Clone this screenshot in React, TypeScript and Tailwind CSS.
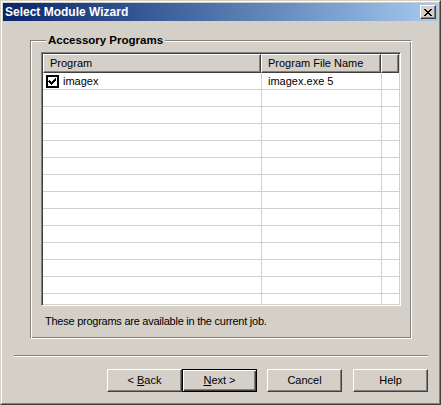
const rows = Array.from({ length: 14 }, (_, i) => i);

const Button = ({ children, isDefault = false, className = "" }: { children: React.ReactNode; isDefault?: boolean; className?: string }) =>
  isDefault ? (
    <div className={"w-[75px] h-[23px] border border-black bg-[#d4d0c8] flex items-center justify-center shadow-[inset_1px_1px_0_#fff,inset_-1px_-1px_0_#404040,inset_-2px_-2px_0_#808080] " + className}>
      {children}
    </div>
  ) : (
    <div className={"w-[75px] h-[23px] border border-t-white border-l-white border-r-[#404040] border-b-[#404040] bg-[#d4d0c8] flex items-center justify-center shadow-[inset_-1px_-1px_0_#808080] " + className}>
      {children}
    </div>
  );

export default function App() {
  return (
    <div className="w-[441px] h-[405px] bg-[#d4d0c8] border border-t-[#d4d0c8] border-l-[#d4d0c8] border-r-[#404040] border-b-[#404040] font-['Liberation_Sans',Arial,sans-serif] text-[11px] text-black">
      <div className="h-full border border-t-white border-l-white border-r-[#808080] border-b-[#808080] p-px flex flex-col">
        {/* Title bar */}
        <div className="h-[18px] bg-linear-to-r from-[#0a246a] to-[#a6caf0] flex items-center justify-between pl-[2px] pr-[2px]">
          <span className="text-white font-bold text-[12px] leading-[18px]">Select Module Wizard</span>
          <div className="w-[16px] h-[14px] bg-[#d4d0c8] border border-t-white border-l-white border-r-[#404040] border-b-[#404040] shadow-[inset_-1px_-1px_0_#808080] flex items-center justify-center">
            <svg width="8" height="7" viewBox="0 0 8 7" shapeRendering="crispEdges">
              <path d="M0 0h2v1h1v1h2v-1h1v-1h2v1h-1v1h-1v1h-1v1h1v1h1v1h1v1h-2v-1h-1v-1h-2v1h-1v1h-2v-1h1v-1h1v-1h1v-1h-1v-1h-1v-1h-1z" fill="#000" />
            </svg>
          </div>
        </div>

        {/* Group box */}
        <fieldset className="mt-[12px] ml-[27px] w-[382px] border border-t-[#808080] border-l-[#808080] border-r-white border-b-white shadow-[inset_1px_1px_0_#fff,inset_-1px_-1px_0_#808080] px-[10px] pb-[10px]">
          <legend className="ml-[5px] px-[2px] bg-[#d4d0c8] font-bold text-[11.5px] leading-[15px]">Accessory Programs</legend>

          <div className="mt-[4px] h-[254px] bg-white border border-t-[#808080] border-l-[#808080] border-r-white border-b-white shadow-[inset_1px_1px_0_#404040,inset_-1px_-1px_0_#d4d0c8] p-px overflow-hidden">
            <div className="h-full overflow-hidden">
              {/* Header */}
              <div className="h-[19px] flex">
                <div className="w-[218px] border border-t-white border-l-white border-r-[#404040] border-b-[#404040] bg-[#d4d0c8] shadow-[inset_-1px_-1px_0_#808080] pl-[6px] flex items-center">Program</div>
                <div className="w-[120px] border border-t-white border-l-white border-r-[#404040] border-b-[#404040] bg-[#d4d0c8] shadow-[inset_-1px_-1px_0_#808080] pl-[6px] flex items-center">Program File Name</div>
                <div className="flex-1 border border-t-white border-l-white border-r-[#404040] border-b-[#404040] bg-[#d4d0c8] shadow-[inset_-1px_-1px_0_#808080]" />
              </div>

              {/* Rows */}
              {rows.map((i) => (
                <div key={i} className="h-[17px] flex border-b border-b-[#d4d0c8]">
                  <div className="w-[219px] border-r border-r-[#d4d0c8] pl-[3px] flex items-center">
                    {i === 0 && (
                      <>
                        <div className="w-[13px] h-[13px] border-2 border-black bg-white flex items-center justify-center">
                          <svg width="9" height="9" viewBox="0 0 9 9" shapeRendering="crispEdges">
                            <path d="M1 3h1v1h1v1h1v-1h1v-1h1v-1h1v-1h1v3h-1v1h-1v1h-1v1h-1v1h-1v-1h-1v-1h-1v-1h-1z" fill="#000" />
                          </svg>
                        </div>
                        <span className="ml-[4px]">imagex</span>
                      </>
                    )}
                  </div>
                  <div className="w-[120px] border-r border-r-[#d4d0c8] pl-[6px] flex items-center">
                    {i === 0 && "imagex.exe 5"}
                  </div>
                  <div className="flex-1" />
                </div>
              ))}
            </div>
          </div>

          <p className="mt-[8px] leading-[14px] pl-[4px] tracking-[-0.25px]">These programs are available in the current job.</p>
        </fieldset>

        {/* Separator */}
        <div className="mt-[16px] ml-[11px] w-[414px] h-[2px] border-t border-t-[#808080] border-b border-b-white" />

        {/* Buttons */}
        <div className="mt-[12px] ml-[104px] flex">
          <Button>
            &lt; <span className="underline ml-[3px]">B</span>ack
          </Button>
          <Button isDefault>
            <span className="underline">N</span>ext &gt;
          </Button>
          <Button className="ml-[10px]">Cancel</Button>
          <Button className="ml-[11px]">Help</Button>
        </div>
      </div>
    </div>
  );
}
